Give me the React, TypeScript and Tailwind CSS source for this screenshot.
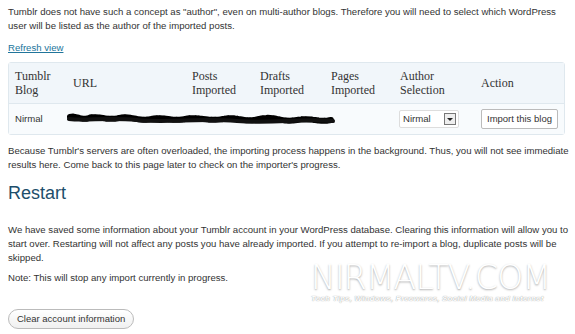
const headers = [
  { label: "Tumblr Blog", w: "w-[58px]" },
  { label: "URL", w: "w-[119px]" },
  { label: "Posts Imported", w: "w-[68px]" },
  { label: "Drafts Imported", w: "w-[71px]" },
  { label: "Pages Imported", w: "w-[69px]" },
  { label: "Author Selection", w: "w-[81px]" },
  { label: "Action", w: "" },
];

function Scribble() {
  // redaction scribble over the blog url
  return (
    <svg width="268" height="14" viewBox="0 0 268 14" className="block">
      <path
        d="M3 5 C10 3 14 9 22 6 S40 9 52 6 S70 10 84 7 S104 10 118 7 S140 10 156 7 S176 11 192 7 S214 11 230 8 S250 11 264 8"
        fill="none"
        stroke="#000"
        strokeWidth="6"
        strokeLinecap="round"
        strokeDasharray="3 1 5 1 2 1"
      />
      <path
        d="M2 7 C20 9 40 5 70 8 S130 6 170 9 S230 6 266 9"
        fill="none"
        stroke="#111"
        strokeWidth="4"
        strokeLinecap="round"
      />
    </svg>
  );
}

export default function App() {
  return (
    <main className="relative h-[334px] w-[575px] overflow-hidden bg-white pl-2 pr-[2px] pt-[5px] font-['Liberation_Sans',Arial,sans-serif] text-[9.6px] leading-[14px] text-[#333]">
      <p>
        Tumblr does not have such a concept as "author", even on multi-author
        blogs. Therefore you will need to select which WordPress
        <br />
        user will be listed as the author of the imported posts.
      </p>
      <a href="#" className="mt-[8px] inline-block text-[#21759b] underline">
        Refresh view
      </a>

      <table className="mt-[7px] w-[557px] border-separate border-spacing-0 rounded-[3px] border border-[#dfe8ee]">
        <thead>
          <tr className="bg-[#f1f6fa]">
            {headers.map((h) => (
              <th
                key={h.label}
                className={`${h.w} h-[41px] border-b border-[#dfe8ee] px-[6px] text-left align-middle font-['Liberation_Serif','Times_New_Roman',serif] text-[12px] font-normal leading-[14px] text-[#333]`}
              >
                {h.label.split(" ").map((w, i) => (
                  <span key={i} className="block">
                    {w}
                  </span>
                ))}
              </th>
            ))}
          </tr>
        </thead>
        <tbody>
          <tr className="bg-[#f8fbfd]">
            <td className="h-[30px] px-[6px] align-middle">Nirmal</td>
            <td colSpan={4} className="align-middle">
              <Scribble />
            </td>
            <td className="px-[5px] align-middle">
              <div className="flex h-[18px] w-[60px] items-center justify-between rounded-[2px] border border-[#ddd] bg-white pl-[3px] pr-[2px]">
                <span>Nirmal</span>
                <span className="flex h-[12px] w-[12px] items-center justify-center border border-[#777] bg-[#eee]">
                  <span className="h-0 w-0 border-x-[3px] border-t-[3px] border-x-transparent border-t-[#222]" />
                </span>
              </div>
            </td>
            <td className="pl-[6px] pr-[4px] align-middle">
              <button className="h-[20px] rounded-[2px] border border-[#bbb] bg-white px-[5px] text-[9.5px] text-[#333]">
                Import this blog
              </button>
            </td>
          </tr>
        </tbody>
      </table>

      <p className="mt-[9px]">
        Because Tumblr's servers are often overloaded, the importing process
        happens in the background. Thus, you will not see immediate
        <br />
        results here. Come back to this page later to check on the importer's
        progress.
      </p>

      <h2 className="mt-[9px] text-[18px] leading-[24px] text-[#1d4e6b]">
        Restart
      </h2>

      <p className="mt-[18px]">
        We have saved some information about your Tumblr account in your
        WordPress database. Clearing this information will allow you to
        <br />
        start over. Restarting will not affect any posts you have already
        imported. If you attempt to re-import a blog, duplicate posts will be
        <br />
        skipped.
      </p>

      <p className="mt-[6px]">Note: This will stop any import currently in progress.</p>

      <button className="mt-[24px] h-[20px] rounded-full border border-[#bbb] bg-gradient-to-b from-white to-[#f0f0f0] px-[8px] text-[9.5px] text-[#333]">
        Clear account information
      </button>

      <div className="pointer-events-none absolute left-[311px] top-[262px] text-white">
        <div className="font-['DejaVu_Sans',sans-serif] text-[33px] font-light leading-[32px] tracking-[-0.8px] [text-shadow:0_1px_2px_rgba(0,0,0,0.35)]">
          NIRMALTV.COM
        </div>
        <div className="text-[8px] font-bold italic leading-[9px] tracking-[0.2px] [text-shadow:0_0_1px_rgba(0,0,0,0.5)]">
          Tech Tips, Windows, Freewares, Social Media and Internet
        </div>
      </div>
    </main>
  );
}
